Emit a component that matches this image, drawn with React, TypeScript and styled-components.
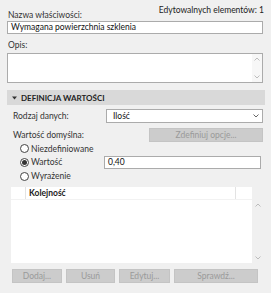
import styled, { createGlobalStyle } from "styled-components";

const Global = createGlobalStyle`
  html, body {
    margin: 0;
    padding: 0;
    background: #f0f0f0;
  }
  body {
    font-family: Lato, "Noto Sans", "Liberation Sans", sans-serif;
    font-size: 8.5px;
    color: #222;
  }
`

const Panel = styled.div`
  width: 271px;
  height: 293px;
  box-sizing: border-box;
  padding: 5px 8px 0 7px;
  display: flex;
  flex-direction: column;
`
const TopRow = styled.div`
  display: flex;
  justify-content: space-between;
  height: 16px;
`
const Label = styled.div<{ $indent?: number }>`
  padding-left: ${(p) => p.$indent ?? 1}px;
  line-height: 12px;
  color: #333;
`
const Counter = styled.div`
  line-height: 10px;
  align-self: flex-start;
  margin-right: -1px;
`
const NameLabel = styled(Label)`
  align-self: flex-end;
`
const TextBox = styled.div<{ $w?: number }>`
  box-sizing: border-box;
  height: 13px;
  width: ${(p) => (p.$w ? `${p.$w}px` : "auto")};
  background: #fff;
  border: 1px solid #ababab;
  padding-left: 3px;
  line-height: 11px;
  color: #111;
`
const OpisLabel = styled(Label)`
  margin-top: 5px;
  height: 14px;
`
const Memo = styled.div`
  box-sizing: border-box;
  height: 30px;
  background: #fff;
  border: 1px solid #ababab;
  display: flex;
  justify-content: flex-end;
`
const MemoScroll = styled.div`
  width: 10px;
  background: #f7f7f7;
  display: flex;
  flex-direction: column;
  justify-content: space-between;
  align-items: center;
  padding: 3px 0;
`
const SectionHead = styled.div`
  margin-top: 7px;
  height: 15px;
  margin-right: -2px;
  background: #d9d9d9;
  display: flex;
  align-items: center;
  padding-left: 5px;
  gap: 4px;
  font-weight: 700;
  font-size: 8px;
  color: #222;
`
const Row = styled.div<{ $h: number; $mt?: number }>`
  display: flex;
  align-items: center;
  justify-content: space-between;
  height: ${(p) => p.$h}px;
  margin-top: ${(p) => p.$mt ?? 0}px;
  padding-left: 5px;
`
const Select = styled.div`
  box-sizing: border-box;
  width: 157px;
  height: 14px;
  background: #fff;
  border: 1px solid #ababab;
  display: flex;
  align-items: center;
  justify-content: space-between;
  padding: 0 3px 0 6px;
  color: #111;
`
const Btn = styled.div<{ $w: number }>`
  box-sizing: border-box;
  width: ${(p) => p.$w}px;
  height: 14px;
  background: #cccccc;
  border: 1px solid #c4c4c4;
  color: #9a9a9a;
  display: flex;
  align-items: center;
  justify-content: center;
`
const RadioRow = styled.div<{ $h: number }>`
  display: flex;
  align-items: center;
  height: ${(p) => p.$h}px;
  padding-left: 13px;
`
const RadioLabel = styled.label`
  display: flex;
  align-items: center;
  gap: 2px;
  width: 84px;
  color: #333;
`
const Circle = styled.span<{ $on?: boolean }>`
  box-sizing: border-box;
  width: 9px;
  height: 9px;
  border-radius: 50%;
  border: 1px solid #444;
  background: #fff;
  display: flex;
  align-items: center;
  justify-content: center;
  &::after {
    content: "";
    display: ${(p) => (p.$on ? "block" : "none")};
    width: 5px;
    height: 5px;
    border-radius: 50%;
    background: #333;
  }
`
const ListWrap = styled.div`
  margin-top: 4px;
  margin-left: 4px;
  height: 76px;
  display: flex;
`
const List = styled.div`
  flex: 1;
  background: #fff;
`
const ListHead = styled.div`
  display: flex;
  height: 12px;
  border-bottom: 1px solid #f2f2f2;
`
const HeadCell = styled.div<{ $w?: number }>`
  box-sizing: border-box;
  width: ${(p) => (p.$w ? `${p.$w}px` : "auto")};
  flex: ${(p) => (p.$w ? "none" : 1)};
  border-right: 1px solid #e3e3e3;
  padding-left: 3px;
  font-weight: 700;
  line-height: 12px;
  color: #222;
  &:last-child {
    border-right: none;
  }
`
const ListScroll = styled.div`
  width: 11px;
  display: flex;
  flex-direction: column;
  justify-content: space-between;
  align-items: center;
  padding: 16px 0 3px;
`
const ButtonBar = styled.div`
  margin-top: 6px;
  margin-left: 5px;
  display: flex;
  gap: 4px;
`

function Chevron({ up }: { up?: boolean }) {
  return (
    <svg width="6" height="4" viewBox="0 0 6 4">
      <path
        d={up ? "M0.5 3.5 L3 1 L5.5 3.5" : "M0.5 0.5 L3 3 L5.5 0.5"}
        fill="none"
        stroke="#b5b5b5"
        strokeWidth="0.9"
      />
    </svg>
  )
}

function Triangle() {
  return (
    <svg width="5" height="4" viewBox="0 0 5 4">
      <path d="M0 0.5 L5 0.5 L2.5 3.5 Z" fill="#333" />
    </svg>
  )
}

export default function App() {
  return (
    <>
      <Global />
      <Panel>
        <TopRow>
          <NameLabel>Nazwa właściwości:</NameLabel>
          <Counter>Edytowalnych elementów: 1</Counter>
        </TopRow>
        <TextBox>Wymagana powierzchnia szklenia</TextBox>
        <OpisLabel>Opis:</OpisLabel>
        <Memo>
          <MemoScroll>
            <Chevron up />
            <Chevron />
          </MemoScroll>
        </Memo>
        <SectionHead>
          <Triangle />
          DEFINICJA WARTOŚCI
        </SectionHead>
        <Row $h={14} $mt={4}>
          <Label>Rodzaj danych:</Label>
          <Select>
            Ilość
            <svg width="6" height="4" viewBox="0 0 6 4">
              <path d="M0.5 0.5 L3 3 L5.5 0.5" fill="none" stroke="#555" strokeWidth="0.9" />
            </svg>
          </Select>
        </Row>
        <Row $h={14} $mt={5}>
          <Label>Wartość domyślna:</Label>
          <Btn $w={114}>Zdefiniuj opcje...</Btn>
        </Row>
        <RadioRow $h={13}>
          <RadioLabel>
            <Circle />
            Niezdefiniowane
          </RadioLabel>
        </RadioRow>
        <RadioRow $h={14}>
          <RadioLabel>
            <Circle $on />
            Wartość
          </RadioLabel>
          <TextBox $w={157}>0,40</TextBox>
        </RadioRow>
        <RadioRow $h={14}>
          <RadioLabel>
            <Circle />
            Wyrażenie
          </RadioLabel>
        </RadioRow>
        <ListWrap>
          <List>
            <ListHead>
              <HeadCell $w={15} />
              <HeadCell>Kolejność</HeadCell>
              <HeadCell $w={16} />
            </ListHead>
          </List>
          <ListScroll>
            <Chevron up />
            <Chevron />
          </ListScroll>
        </ListWrap>
        <ButtonBar>
          <Btn $w={50}>Dodaj...</Btn>
          <Btn $w={49}>Usuń</Btn>
          <Btn $w={51}>Edytuj...</Btn>
          <Btn $w={84}>Sprawdź...</Btn>
        </ButtonBar>
      </Panel>
    </>
  )
}
